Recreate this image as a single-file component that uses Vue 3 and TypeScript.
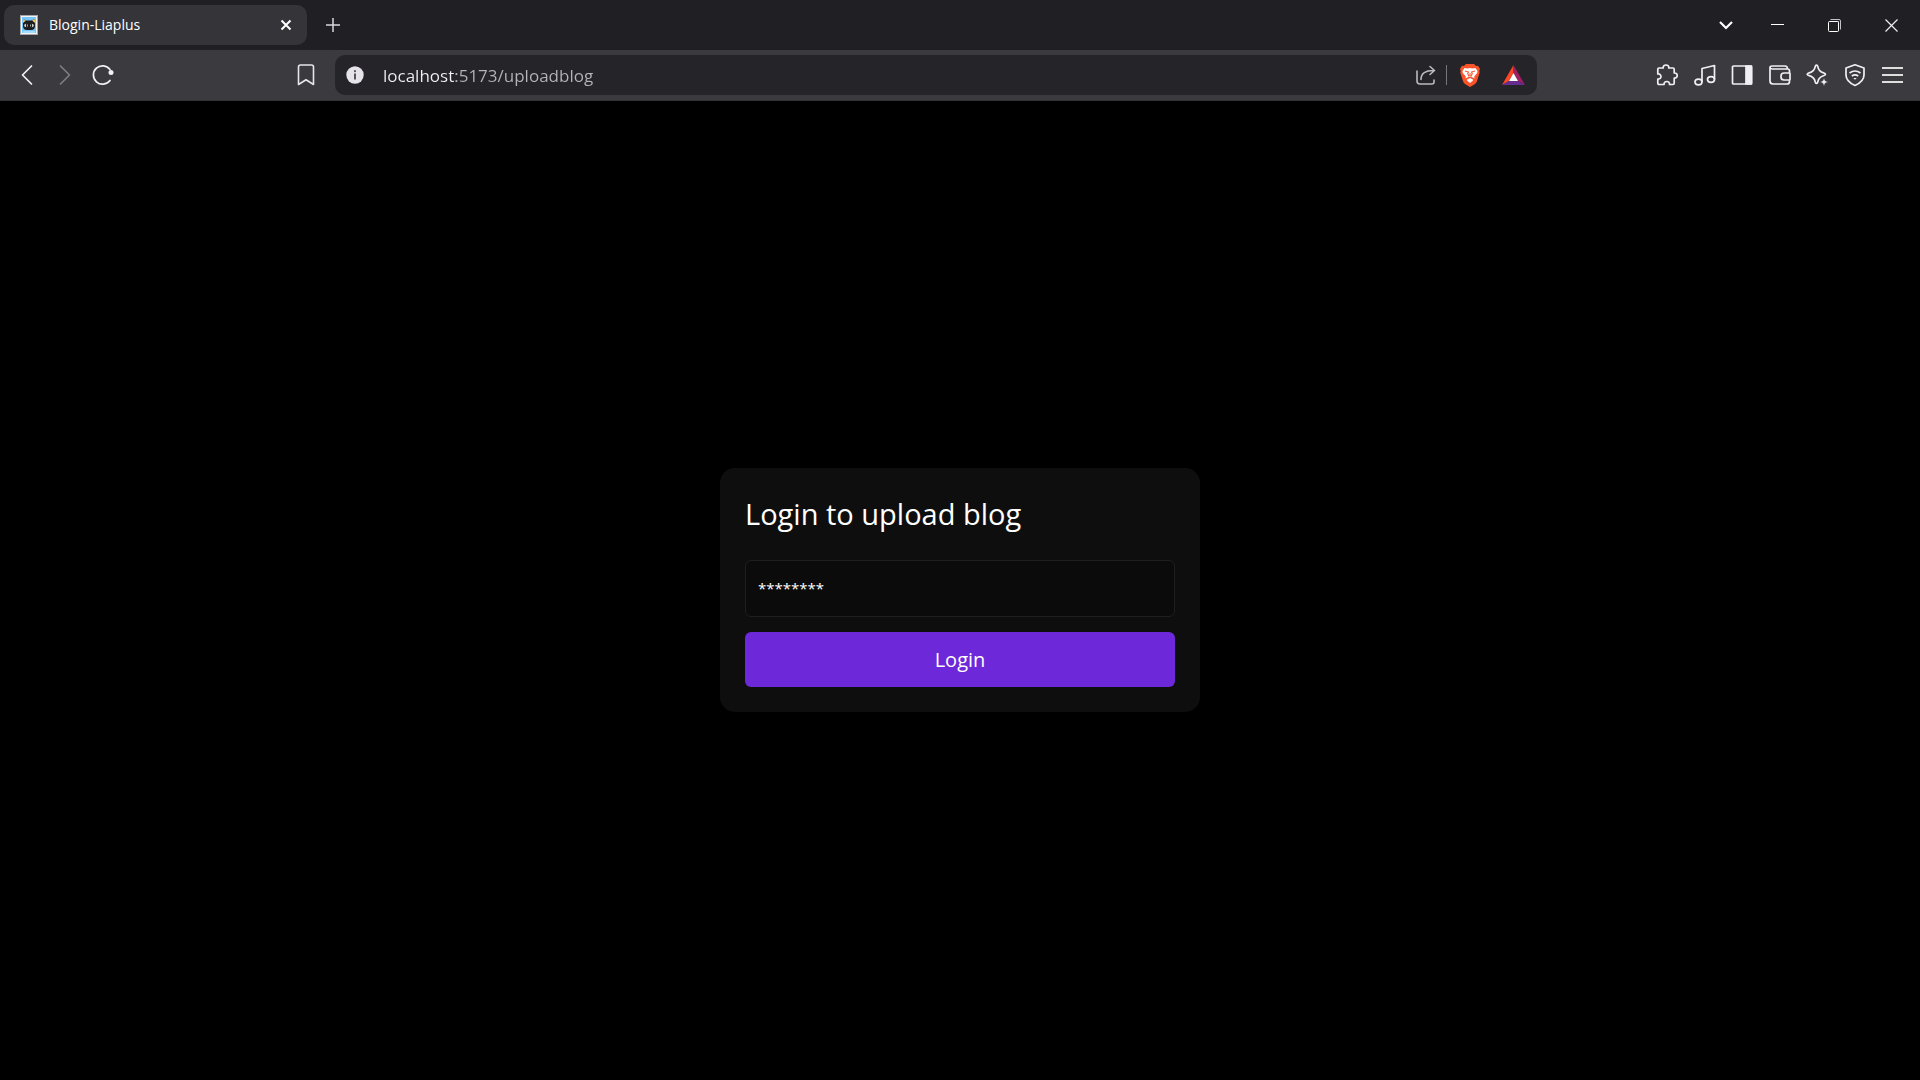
<script setup lang="ts">
import { ref } from 'vue'

const address = ref('localhost:5173/uploadblog')
const password = ref('********')
</script>

<template>
  <div class="browser">
    <header class="tabstrip">
      <div class="tab">
        <svg class="favicon" width="18" height="20" viewBox="0 0 18 20">
          <rect width="18" height="20" fill="#f4f4f2" />
          <rect x=".5" y=".5" width="17" height="19" fill="none" stroke="#55565a" stroke-dasharray="1 1" />
          <rect x="2" y="2" width="14" height="16" fill="#74c6fb" />
          <path d="M3 16h12v2H3z" fill="#a5dcfb" />
          <path d="M3 4l3.500 1.500h5L15 4v7q0 4-4 4H7q-4 0-4-4z" fill="#1d1b1c" />
          <path d="M3 4l3 1.500L3 8zM15 4l-3 1.500L15 8z" fill="#e9c56c" />
          <ellipse cx="6" cy="10.500" rx="1.800" ry="1.800" fill="#c9ccc8" />
          <ellipse cx="12" cy="10.500" rx="1.800" ry="1.800" fill="#c9ccc8" />
          <path d="M6.500 9v3M11.500 9v3" stroke="#222" />
        </svg>
        <span class="tab-title">Blogin-Liaplus</span>
        <button class="tab-close" type="button" aria-label="Close tab">
          <svg width="12" height="12" viewBox="0 0 12 12" fill="none" stroke="#fff" stroke-width="2"><path d="M1.500 1.500l9 9M10.500 1.500l-9 9" /></svg>
        </button>
      </div>
      <button class="new-tab" type="button" aria-label="New tab">
        <svg width="14" height="14" viewBox="0 0 14 14" fill="none" stroke="#d8d8da" stroke-width="1.500"><path d="M7 0v14M0 7h14" /></svg>
      </button>
      <div class="window-controls">
        <button class="tab-search" type="button" aria-label="Search tabs">
          <svg width="14" height="9" viewBox="0 0 14 9" fill="none" stroke="#fff" stroke-width="2.200"><path d="M1 1l6 6 6-6" /></svg>
        </button>
        <button type="button" aria-label="Minimize">
          <svg width="13" height="13" viewBox="0 0 13 13"><path d="M0 5h13v1H0z" fill="#fff" /></svg>
        </button>
        <button type="button" aria-label="Restore">
          <svg width="13" height="13" viewBox="0 0 13 13" fill="none" stroke="#fff">
            <path d="M2.500.500H11q1.500 0 1.500 1.500v8.500" stroke="#c4c4c6" />
            <path d="M1 2.500h9.500V12" stroke="#88888b" />
            <rect x=".5" y="2.500" width="10" height="10" rx="1" />
          </svg>
        </button>
        <button type="button" aria-label="Close">
          <svg width="13" height="13" viewBox="0 0 13 13" fill="none" stroke="#eee" stroke-width="1.200"><path d="M.500.500l12 12M12.500.500l-12 12" /></svg>
        </button>
      </div>
    </header>

    <nav class="toolbar" aria-label="Browser toolbar">
      <div class="nav-buttons">
        <button type="button" aria-label="Back">
          <svg width="22" height="22" viewBox="0 0 22 22" fill="none" stroke="#f2f2f4" stroke-width="1.700" stroke-linecap="round" stroke-linejoin="round"><path d="M15.500 2L6.500 11l9 9" /></svg>
        </button>
        <button type="button" aria-label="Forward">
          <svg width="22" height="22" viewBox="0 0 22 22" fill="none" stroke="#7d7d81" stroke-width="1.700" stroke-linecap="round" stroke-linejoin="round"><path d="M6.500 2l9 9-9 9" /></svg>
        </button>
        <button type="button" aria-label="Reload">
          <svg width="22" height="22" viewBox="0 0 22 22" fill="none" stroke="#f2f2f4" stroke-width="1.700" stroke-linecap="round">
            <path d="M18 5.500A9.200 9.200 0 1 0 18 16.500" /><circle cx="19" cy="8.500" r="2.500" fill="#f2f2f4" stroke="none" />
          </svg>
        </button>
        <button class="bookmark" type="button" aria-label="Bookmark this page">
          <svg width="18" height="22" viewBox="0 0 18 22" fill="none" stroke="#e6e6e9" stroke-width="1.600" stroke-linejoin="round"><path d="M3.500 1h11Q16.500 1 16.500 3v17.500L9 15.800l-7.500 4.700V3Q1.500 1 3.500 1z" /></svg>
        </button>
      </div>

      <div class="address-bar">
        <button class="site-info" type="button" aria-label="Site information">
          <svg width="18" height="18" viewBox="0 0 18 18"><circle cx="9" cy="9" r="8.700" fill="#e6e4ea" /><circle cx="9" cy="5.200" r="1.100" fill="#55555c" /><path d="M8 7.500h2v6H8z" fill="#55555c" /></svg>
        </button>
        <input v-model="address" class="address" type="text" aria-label="Address" />
        <button class="share" type="button" aria-label="Share">
          <svg width="20" height="20" viewBox="0 0 20 20" fill="none" stroke="#b9b9be" stroke-width="1.600" stroke-linecap="round" stroke-linejoin="round"><path d="M1 6v10q0 3 3 3h12q2 0 2-2v-2M5 14.500C5 8 9 5.500 17.500 5.500M14 1.500l4.500 4-4.500 4" /></svg>
        </button>
        <span class="divider"></span>
        <button class="shields" type="button" aria-label="Brave Shields">
          <svg width="20" height="23" viewBox="0 0 20 23">
            <path d="M6 0h8l2 2 2-.3L20 5l-.7 2 .4 1.500-3 9.500-1.700 2L10 23l-5-3-1.700-2-3-9.500L.7 7 0 5l2-3.300L4 2z" fill="#fb542b" />
            <path d="M4.500 4l3 .5L10 4l2.500.500 3-.5 2 3-.3 2-3 3.500.4 2-2.600-1.200L10 12.500l-2 .8L5.400 14.500l.4-2L2.800 9l-.3-2zM7 15.500l3-1.600 3 1.600-.2 1.200L10 19l-2.800-2.300z" fill="#fff" />
            <path d="M5 7l3.500 1-.8 1.500 1.300 3M15 7l-3.500 1 .8 1.500-1.300 3M10 9v3" stroke="#fb542b" stroke-width="1.100" fill="none" />
          </svg>
        </button>
        <button class="rewards" type="button" aria-label="Brave Rewards">
          <svg width="23" height="20" viewBox="0 0 23 20"><path d="M11.500 0L0 20l7-4 4.500-8z" fill="#ff4724" /><path d="M11.500 0L23 20l-7-4-4.500-8z" fill="#9e1f63" /><path d="M0 20h23l-7-4H7z" fill="#662d91" /><path d="M11.500 8L16 16H7z" fill="#fff" /></svg>
        </button>
      </div>

      <div class="tools">
        <button type="button" aria-label="Extensions">
          <svg width="22" height="22" viewBox="0 0 22 22" class="line"><path d="M3 4h4.200C7 1.800 8.500 1 10 1s3 .8 2.800 3H17q1.200 0 1.200 1.200V9c2-.2 3 1 3 2.500s-1 2.700-3 2.500v5q0 1.500-1.200 1.500h-3.500c.3-2-1-3-2.700-3s-3 1-2.700 3H3q-1.200 0-1.200-1.200V15c2 .3 3.200-1 3.200-2.500S3.800 9.700 1.800 10V5.200Q1.800 4 3 4z" /></svg>
        </button>
        <button type="button" aria-label="Playlist">
          <svg width="22" height="22" viewBox="0 0 22 22" class="line"><ellipse cx="4.500" cy="18" rx="3.500" ry="2.800" /><ellipse cx="17" cy="15.500" rx="3.500" ry="2.800" /><path d="M8 18V4.500L20.500 1.500v14" /></svg>
        </button>
        <button type="button" aria-label="Sidebar">
          <svg width="22" height="22" viewBox="0 0 22 22" class="line"><rect x="1.500" y="2" width="19" height="18" rx="1" /><path d="M15 2h5.500v18H15z" fill="#f0f0f3" /></svg>
        </button>
        <button type="button" aria-label="Wallet">
          <svg width="22" height="22" viewBox="0 0 22 22" class="line"><path d="M20.500 9V7q0-2-2-2h-15Q1 5 1 3.500T3.500 2H16q2.500 0 2.500 3M1 3.500V17q0 3 3 3h14q2.500 0 2.500-2.500V16M20.500 9H15q-3 0-3 3v1q0 3 3 3h5.500q.5 0 .5-.5v-6q0-.5-.5-.5z" /></svg>
        </button>
        <button type="button" aria-label="Leo AI">
          <svg width="22" height="22" viewBox="0 0 22 22" class="line"><path d="M10.500 1.200q1 0 1.300 1.500 1 5 5.700 6.200 2 .5 2 1.400t-2 1.400q-4.700 1.200-5.700 6.200-.3 1.500-1.300 1.500t-1.300-1.500q-1-5-6-6.200-2-.5-2-1.400t2-1.400q5-1.200 6-6.200.3-1.500 1.300-1.500z" /><path d="M18 14l1.200 2.800L22 18l-2.800 1.200L18 22l-1.200-2.800L14 18l2.800-1.200z" fill="#f0f0f3" stroke="#3b3a3f" stroke-width=".5" /></svg>
        </button>
        <button type="button" aria-label="VPN">
          <svg width="22" height="22" viewBox="0 0 22 22" class="line"><path d="M11 .800l9 3.200v7c0 5-3.500 8-9 10.500C5.500 19 2 16 2 11V4z" /><path d="M5.500 9q5.500-4 11 0M7.800 12q3.200-2.200 6.400 0" /><path d="M9.300 14h3.400L11 15.800z" fill="#f0f0f3" stroke-width="0" /></svg>
        </button>
        <button type="button" aria-label="Menu">
          <svg width="22" height="22" viewBox="0 0 22 22"><path d="M1 3h21v2H1zM1 10h21v2H1zM1 17h21v2H1z" fill="#dededf" /></svg>
        </button>
      </div>
    </nav>

    <main class="page">
      <form class="card" @submit.prevent>
        <h1>Login to upload blog</h1>
        <input v-model="password" class="password" type="text" aria-label="Password" />
        <button class="login" type="submit">Login</button>
      </form>
    </main>
  </div>
</template>

<style>
body {
  margin: 0;
  background: #000;
}
</style>

<style scoped>
.browser {
  display: flex;
  flex-direction: column;
  min-height: 100vh;
  background: #000;
  color: #fff;
  font-family: "Segoe UI", "Open Sans", "Noto Sans", sans-serif;
}

* {
  box-sizing: border-box;
}

button {
  display: flex;
  align-items: center;
  justify-content: center;
  padding: 0;
  border: 0;
  background: none;
  color: inherit;
  font: inherit;
}

svg {
  flex: none;
  overflow: visible;
}

.line {
  fill: none;
  stroke: #f0f0f3;
  stroke-width: 1.7px;
  stroke-linejoin: round;
}

.tabstrip {
  display: flex;
  align-items: center;
  height: 50px;
  padding-left: 4px;
  background: #201f24;
}

.tab {
  display: flex;
  align-items: center;
  width: 303px;
  height: 40px;
  padding: 0 15px 0 16px;
  border-radius: 10px;
  background: #353438;
}

.tab-title {
  flex: 1;
  margin-left: 11px;
  font-size: 14px;
  line-height: 20px;
}

.new-tab {
  width: 52px;
  height: 40px;
}

.window-controls {
  display: flex;
  margin-left: auto;
}

.window-controls button {
  width: 57px;
  height: 48px;
}

.window-controls .tab-search {
  width: 46px;
}

.toolbar {
  display: flex;
  align-items: center;
  height: 51px;
  background: #3b3a3f;
  border-bottom: 1px solid #323136;
}

.nav-buttons {
  display: flex;
  width: 335px;
  padding: 0 10px 0 8px;
}

.nav-buttons button {
  width: 38px;
  height: 38px;
}

.nav-buttons .bookmark {
  margin-left: auto;
}

.address-bar {
  display: flex;
  flex: 1;
  align-items: center;
  height: 40px;
  padding-right: 4px;
  border-radius: 10px;
  background: #252429;
}

.site-info {
  width: 40px;
  height: 40px;
}

/* The host is drawn brighter than the port and path that follow it. */
.address {
  flex: 1;
  min-width: 0;
  height: 40px;
  padding: 0 0 0 8px;
  border: 0;
  outline: 0;
  background: linear-gradient(90deg, #f2f2f5 81px, #b5b4b9 81px);
  background-clip: text;
  -webkit-text-fill-color: transparent;
  font: inherit;
  font-size: 17px;
}

.share {
  width: 40px;
  height: 40px;
}

.divider {
  width: 1px;
  height: 20px;
  background: #77767b;
}

.shields {
  width: 46px;
  height: 40px;
}

.rewards {
  width: 40px;
  height: 40px;
}

.tools {
  display: flex;
  justify-content: space-between;
  width: 383px;
  padding: 0 10px 0 112px;
}

.tools button {
  width: 36px;
  height: 38px;
}

.page {
  display: flex;
  flex: 1;
  align-items: center;
  justify-content: center;
  padding-bottom: 2px;
}

.card {
  display: flex;
  flex-direction: column;
  width: 480px;
  padding: 25px;
  border-radius: 15px;
  background: #0e0e0e;
}

h1 {
  margin: 0 0 25px;
  font-size: 29px;
  font-weight: 400;
  line-height: 42px;
}

.password {
  height: 57px;
  margin-bottom: 15px;
  padding: 0 12px;
  border: 1px solid #1f1f1f;
  border-radius: 6px;
  outline: 0;
  background: #0b0b0b;
  color: #fff;
  font: inherit;
  font-size: 15px;
}

.login {
  height: 55px;
  border-radius: 6px;
  background: #6d28d9;
  font-size: 20px;
}
</style>
